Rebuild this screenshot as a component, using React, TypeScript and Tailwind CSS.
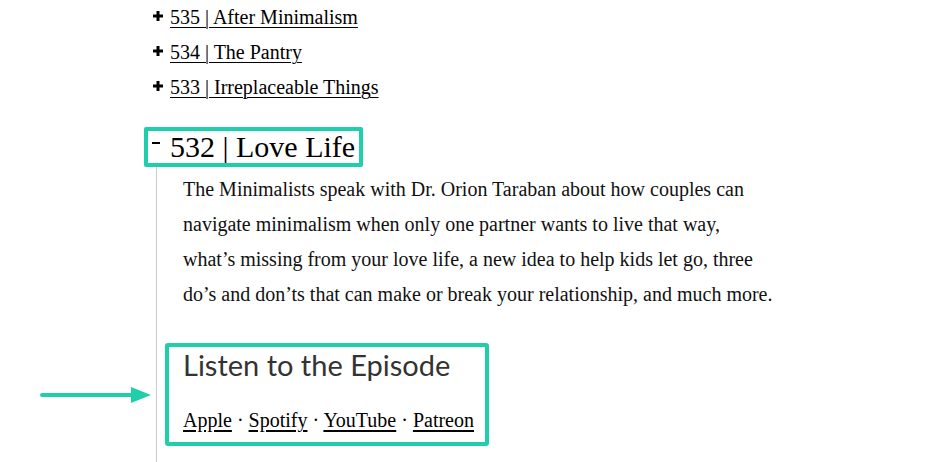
import React from "react";

const serif = { fontFamily: '"Liberation Serif", "Times New Roman", serif' };

function Plus() {
  return (
    <svg width="18" height="35" viewBox="0 0 18 35" className="shrink-0">
      <rect x="1" y="14.5" width="10" height="3" fill="#000" />
      <rect x="4.5" y="11" width="3" height="10" fill="#000" />
    </svg>
  );
}

function Row({ title }: { title: string }) {
  return (
    <div className="flex items-start pl-2 h-[35px]">
      <Plus />
      <a href="#" className="text-[20px] leading-[35px] text-black underline underline-offset-[3px] decoration-1">
        {title}
      </a>
    </div>
  );
}

export default function App() {
  return (
    <div className="relative w-[926px] h-[462px] overflow-hidden bg-white" style={serif}>
      <div className="pl-[144px] pt-0">
        <Row title="535 | After Minimalism" />
        <Row title="534 | The Pantry" />
        <Row title="533 | Irreplaceable Things" />

        <div className="mt-[22px] inline-flex items-center border-[4px] border-[#1fcfac] rounded-[2px] pl-1 pr-[4px] h-[40px]">
          <span className="w-[18px] flex items-start h-[32px]">
            <span className="block w-[8px] h-[2px] bg-black mt-[11px]"></span>
          </span>
          <span className="text-[30px] leading-[32px] text-black">532 | Love Life</span>
        </div>

        <div className="ml-[12px] border-l border-[#cccccc] pl-[8px] pt-[5px] pb-[40px]">
          <p className="pl-[18px] text-[20px] leading-[35px] text-[#111]">
            The Minimalists speak with Dr. Orion Taraban about how couples can
            <br />
            navigate minimalism when only one partner wants to live that way,
            <br />
            what’s missing from your love life, a new idea to help kids let go, three
            <br />
            do’s and don’ts that can make or break your relationship, and much more.
          </p>

          <div className="mt-[31px] w-[324px] border-[4px] border-[#1fcfac] rounded-[3px] pl-[14px] pb-[4px]">
            <h2
              className="text-[29px] leading-[36px] text-[#333333]"
              style={{ fontFamily: 'Lato, "Noto Sans", sans-serif' }}
            >
              Listen to the Episode
            </h2>
            <div className="mt-[20px] text-[20px] leading-[35px] text-black whitespace-nowrap">
              <a href="#" className="underline underline-offset-[3px]">Apple</a>
              <span> · </span>
              <a href="#" className="underline underline-offset-[3px]">Spotify</a>
              <span> · </span>
              <a href="#" className="underline underline-offset-[3px]">YouTube</a>
              <span> · </span>
              <a href="#" className="underline underline-offset-[3px]">Patreon</a>
            </div>
          </div>
        </div>
      </div>

      <svg className="absolute left-[38px] top-[385px]" width="116" height="20" viewBox="0 0 116 20">
        <line x1="4" y1="10" x2="96" y2="10" stroke="#1fcfac" strokeWidth="4" strokeLinecap="round" />
        <polygon points="93,2 113,10 93,18" fill="#1fcfac" />
      </svg>
    </div>
  );
}
